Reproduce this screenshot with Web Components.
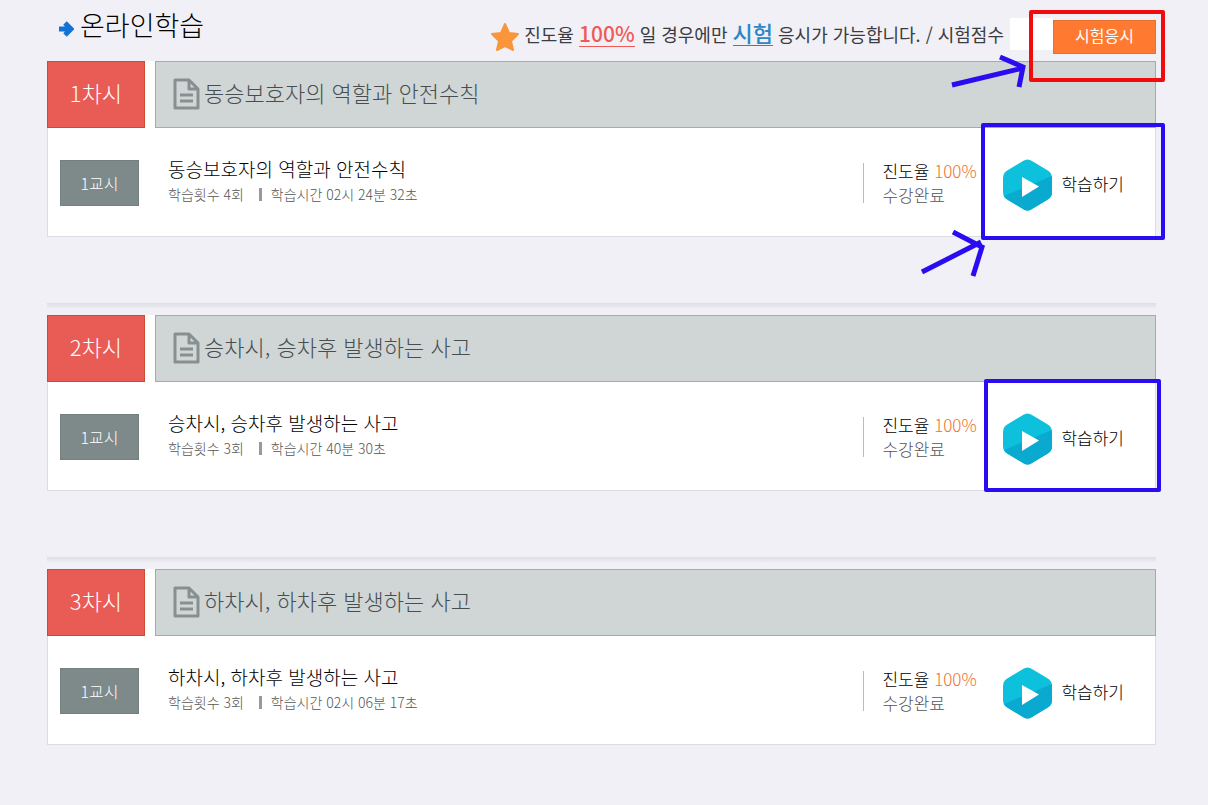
<!DOCTYPE html>
<html lang="ko">
<head>
<meta charset="utf-8">
<title>온라인학습</title>
<style>
body{margin:0;background:#f0f0f6;font-family:"Noto Sans CJK KR",sans-serif;font-weight:300;color:#000}
</style>
</head>
<body>
<learning-page>
  <page-header slot="header">온라인학습</page-header>
  <lesson-card no="1" heading="동승보호자의 역할과 안전수칙" count="4" time="02시 24분 32초"></lesson-card>
  <lesson-card no="2" heading="승차시, 승차후 발생하는 사고" count="3" time="40분 30초"></lesson-card>
  <lesson-card no="3" heading="하차시, 하차후 발생하는 사고" count="3" time="02시 06분 17초"></lesson-card>
  <guide-marks slot="marks"></guide-marks>
</learning-page>

<template id="learning-page">
  <style>
    :host{display:block;position:relative;padding:0 52px 59px 47px}
    main{display:flex;flex-direction:column}
    ::slotted(lesson-card:not(:first-of-type)){margin-top:66px}
  </style>
  <slot name="header"></slot>
  <main><slot></slot></main>
  <slot name="marks"></slot>
</template>

<template id="page-header">
  <style>
    :host{display:flex;justify-content:space-between;height:61px}
    h1{display:flex;align-items:center;gap:6px;margin:0 0 0 11px;height:50px;font-size:27px;line-height:36px;font-weight:300}
    h1 svg{margin-top:8px}
    .notice{display:flex;align-items:center;height:48px;padding-top:13px;white-space:nowrap}
    p{margin:0 6px 6px 4px;font-size:18px;line-height:32px;font-weight:400;color:#3c3c40}
    strong,em{font-style:normal;font-weight:500;line-height:26px;display:inline-block;border-bottom:1px solid}
    strong{color:#f05a55;font-size:21px}
    em{color:#2d86c4;font-size:22px}
    input{box-sizing:border-box;width:43px;height:32px;margin:0 0 6px;padding:0 4px;border:0;background:#fff;font:inherit;font-size:16px}
    button{width:103px;height:34px;padding:0 0 4px;border:1px solid #e5712f;background:#ff7a30;color:#fff;font:inherit;font-size:16px;font-weight:400;line-height:24px}
  </style>
  <h1>
    <svg width="16" height="16" viewBox="0 0 16 16" aria-hidden="true"><path d="M1 8h11M7 2l6 6-6 6" fill="none" stroke="#1272d8" stroke-width="5"/></svg>
    <slot></slot>
  </h1>
  <div class="notice">
    <svg width="30" height="30" viewBox="0 0 30 30" aria-hidden="true"><path d="M15 2l4 9 9 1-7 7 2 9-8-4-8 4 2-9-7-7 9-1z" fill="#fa953b" stroke="#fa953b" stroke-width="2" stroke-linejoin="round"/></svg>
    <p><label for="score">진도율 <strong>100%</strong> 일 경우에만 <em>시험</em> 응시가 가능합니다. / 시험점수</label></p>
    <input id="score" type="text" readonly>
    <button type="button">시험응시</button>
  </div>
</template>

<template id="lesson-card">
  <style>
    :host{display:block}
    .strip{height:5px;margin-bottom:7px;background:linear-gradient(#dedfe5,#ebecf1)}
    section{background:#fff;border:1px solid #dcdce4;border-top:0}
    header{display:flex;gap:10px;margin:0 -1px}
    .no{box-sizing:border-box;width:98px;height:67px;border:1px solid #cf4a33;background:#e95b55;color:#fff;font-size:22px;line-height:60px;text-align:center}
    h2{box-sizing:border-box;flex:1;display:flex;align-items:center;gap:4px;margin:0;height:67px;padding:0 17px 2px;border:1px solid #a3acac;background:#d0d6d5;color:#464e52;font-size:22px;font-weight:300;line-height:32px}
    h2 span{padding-bottom:4px}
    .row{box-sizing:border-box;display:flex;align-items:center;height:108px;padding:2px 31px 0 12px}
    .period{width:79px;height:46px;box-sizing:border-box;border:1px solid #748080;background:#7e8a8a;color:#fff;font-size:16px;line-height:44px;text-align:center}
    .info{flex:1;margin-left:29px;padding-bottom:6px}
    h3{margin:0;font-size:19px;font-weight:300;line-height:28px}
    .meta{display:flex;align-items:center;margin:0;font-size:14px;line-height:22px;color:#555}
    .meta i{width:3px;height:13px;margin:0 9px 0 15px;background:#999}
    .progress{box-sizing:border-box;width:140px;height:40px;display:flex;flex-direction:column;justify-content:center;border-left:1px solid #bbb;padding-left:18px;font-size:17px;line-height:24px}
    .progress p{margin:0}
    .progress b{font-weight:300;color:#f07030}
    .state{color:#555}
    study-button{margin-top:4px}
  </style>
  <div class="strip"></div>
  <section>
    <header>
      <div class="no"></div>
      <h2><svg width="27" height="32" viewBox="0 0 27 32" aria-hidden="true"><path d="M2 2h14l9 9v19H2zM16 2v9h9M7 17h13M7 23h13" fill="none" stroke="#879090" stroke-width="3" stroke-linejoin="round"/></svg><span></span></h2>
    </header>
    <div class="row">
      <div class="period">1교시</div>
      <div class="info"><h3></h3><p class="meta"><span class="count"></span><i></i><span class="time"></span></p></div>
      <div class="progress"><p>진도율 <b>100%</b></p><p class="state">수강완료</p></div>
      <study-button>학습하기</study-button>
    </div>
  </section>
</template>

<template id="study-button">
  <style>
    :host{display:block}
    button{display:flex;align-items:center;gap:9px;padding:0;border:0;background:none;color:#000;font:inherit;font-size:17px;line-height:24px}
    span{padding-bottom:3px}
  </style>
  <button type="button">
    <svg width="49" height="52" viewBox="0 0 49 52" aria-hidden="true">
      <path d="M20 2q4.500-3 9 0l15 9q5 2.500 5 8v14q0 5.500-5 8l-15 9q-4.500 3-9 0l-15-9q-5-2.500-5-8V19q0-5.500 5-8z" fill="#0dc1dc"/>
      <path d="M49 17v16q0 5.500-5 8l-15 9q-4.500 3-9 0l-15-9q-3-1.500-4-4z" fill="#09a9d0"/>
      <path d="M19 18l17 9.500L19 38z" fill="#fff"/>
    </svg>
    <span><slot></slot></span>
  </button>
</template>

<template id="guide-marks">
  <style>
    :host{position:absolute;top:0;right:0;pointer-events:none}
    svg{display:block}
  </style>
  <svg width="300" height="500" viewBox="0 0 300 500" fill="none" stroke-width="4" stroke-linejoin="round" aria-hidden="true">
    <rect x="123" y="12" width="132" height="68" stroke="#f00c0c"/>
    <g stroke="#2a0cf0">
      <rect x="75" y="125" width="180" height="113"/>
      <rect x="78" y="381" width="173" height="109"/>
      <path d="M44 85L115 68M92 57L115 67L111 87M14 272L73 242M45 232L74 247L65 276" stroke-width="5" stroke-linejoin="miter"/>
    </g>
  </svg>
</template>

<script>
class TemplateElement extends HTMLElement {
  constructor() {
    super();
    this.attachShadow({ mode: "open" }).append(
      document.getElementById(this.localName).content.cloneNode(true));
  }
}
class LearningPage extends TemplateElement {}
class PageHeader extends TemplateElement {}
class StudyButton extends TemplateElement {}
class GuideMarks extends TemplateElement {}
class LessonCard extends TemplateElement {
  connectedCallback() {
    const set = (selector, text) => { this.shadowRoot.querySelector(selector).textContent = text; };
    set(".no", this.getAttribute("no") + "차시");
    set("h2 span", this.getAttribute("heading"));
    set("h3", this.getAttribute("heading"));
    set(".count", "학습횟수 " + this.getAttribute("count") + "회");
    set(".time", "학습시간 " + this.getAttribute("time"));
    const strip = this.shadowRoot.querySelector(".strip");
    if (this.getAttribute("no") === "1") strip.remove();
  }
}
customElements.define("study-button", StudyButton);
customElements.define("page-header", PageHeader);
customElements.define("lesson-card", LessonCard);
customElements.define("guide-marks", GuideMarks);
customElements.define("learning-page", LearningPage);
</script>
</body>
</html>
